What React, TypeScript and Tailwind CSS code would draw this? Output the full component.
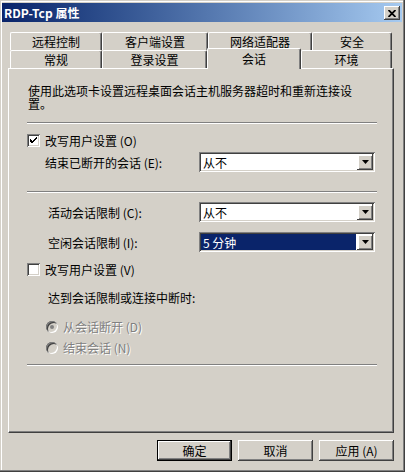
const FONT = "font-['Noto_Sans_CJK_SC','Liberation_Sans',sans-serif]";

const raised =
  "bg-[#d4d0c8] shadow-[inset_-1px_-1px_#404040,inset_1px_1px_#ffffff,inset_-2px_-2px_#808080]";
const sunken =
  "shadow-[inset_1px_1px_#808080,inset_-1px_-1px_#ffffff,inset_2px_2px_#404040,inset_-2px_-2px_#d4d0c8]";

function Tab({ label, width, selected }: { label: string; width: string; selected?: boolean }) {
  return (
    <div
      className={`${width} flex justify-center rounded-t-[2px] border-l border-t border-r border-l-white border-t-white border-r-[#404040] bg-[#d4d0c8] shadow-[inset_-1px_0_#808080] ${
        selected ? "relative z-10 -mb-[1px] h-[21px] items-start pt-[3px]" : "h-[18px] items-center"
      }`}
    >
      {label}
    </div>
  );
}

function Separator({ className }: { className: string }) {
  return <div className={`h-[2px] w-[350px] border-t border-b border-t-[#808080] border-b-white ${className}`} />;
}

function Checkbox({ checked }: { checked?: boolean }) {
  return (
    <div className={`flex h-[13px] w-[13px] shrink-0 items-center justify-center bg-white ${sunken}`}>
      {checked && (
        <svg width="7" height="7" viewBox="0 0 7 7">
          <path d="M0 2 L2 4 L7 -1 L7 1.5 L2 6.5 L0 4.5 Z" fill="#000" shapeRendering="crispEdges" />
        </svg>
      )}
    </div>
  );
}

function Radio({ dot }: { dot?: boolean }) {
  return (
    <div className="flex h-[12px] w-[12px] shrink-0 items-center justify-center rounded-full bg-[#d4d0c8] shadow-[inset_1px_1px_#808080,inset_-1px_-1px_#ffffff,inset_2px_2px_#404040]">
      {dot && <div className="h-[4px] w-[4px] rounded-full bg-[#808080]" />}
    </div>
  );
}

function Combo({ value, selected }: { value: string; selected?: boolean }) {
  return (
    <div className={`flex h-[20px] w-[176px] shrink-0 bg-white p-[2px] ${sunken}`}>
      <div className="flex h-full flex-1 items-center pr-[1px]">
        {selected ? (
          <span className="flex h-full w-full items-center bg-[#0a246a] pl-[2px] text-white">{value}</span>
        ) : (
          <span className="pl-[2px]">{value}</span>
        )}
      </div>
      <div
        className={`flex h-[16px] w-[16px] items-center justify-center bg-[#d4d0c8] shadow-[inset_-1px_-1px_#404040,inset_2px_2px_#ffffff,inset_-2px_-2px_#808080]`}
      >
        <svg width="7" height="4" viewBox="0 0 7 4">
          <path d="M0 0 H7 L3.5 4 Z" fill="#000" />
        </svg>
      </div>
    </div>
  );
}

function Button({ label, primary }: { label: string; primary?: boolean }) {
  return (
    <div className={`h-[21px] w-[75px] ${primary ? "border border-black" : ""}`}>
      <div className={`flex h-full w-full items-center justify-center ${raised}`}>{label}</div>
    </div>
  );
}

export default function App() {
  return (
    <div className={`h-[472px] w-[405px] bg-[#d4d0c8] text-[12px] leading-[13px] text-black ${FONT}`}>
      <div className="flex h-full flex-col pl-[2px] pr-[3px] pt-[3px] shadow-[inset_-1px_-1px_#404040,inset_-2px_-2px_#808080,inset_1px_1px_#d4d0c8,inset_2px_2px_#ffffff]">
        {/* title bar */}
        <div className="flex h-[19px] items-start justify-between bg-linear-to-r from-[#0a246a] to-[#a6caf0] pl-[2px] pr-[2px]">
          <span className="mt-[3px] font-bold text-white">RDP-Tcp 属性</span>
          <div className={`mt-[3px] flex h-[14px] w-[16px] items-center justify-center ${raised}`}>
            <svg width="8" height="7" viewBox="0 0 8 7">
              <path d="M0.5 0 L7.5 7 M7.5 0 L0.5 7" stroke="#000" strokeWidth="1.8" />
            </svg>
          </div>
        </div>

        <div className="ml-[6px] mt-[10px] w-[386px]">
          {/* tabs */}
          <div className="flex pl-[2px]">
            <Tab label="远程控制" width="w-[92px]" />
            <Tab label="客户端设置" width="w-[106px]" />
            <Tab label="网络适配器" width="w-[104px]" />
            <Tab label="安全" width="w-[80px]" />
          </div>
          <div className="flex h-[18px] items-end pl-[2px]">
            <Tab label="常规" width="w-[92px]" />
            <Tab label="登录设置" width="w-[105px]" />
            <Tab label="会话" width="w-[94px]" selected />
            <Tab label="环境" width="w-[91px]" />
          </div>

          {/* panel */}
          <div className="flex h-[365px] flex-col border border-t-white border-l-white border-r-[#404040] border-b-[#404040] pl-[18px] pt-[15px] shadow-[inset_-1px_-1px_#808080]">
            <p className="w-[330px] pl-[1px]">使用此选项卡设置远程桌面会话主机服务器超时和重新连接设置。</p>

            <Separator className="mt-[12px]" />

            <div className="mt-[10px] flex items-center gap-[5px]">
              <Checkbox checked />
              <span>改写用户设置 (O)</span>
            </div>
            <div className="mt-[5px] flex h-[20px] items-center pl-[18px]">
              <span className="w-[154px]">结束已断开的会话 (E):</span>
              <Combo value="从不" />
            </div>

            <Separator className="mt-[19px]" />

            <div className="mt-[9px] flex h-[20px] items-center pl-[21px]">
              <span className="w-[151px]">活动会话限制 (C):</span>
              <Combo value="从不" />
            </div>
            <div className="mt-[10px] flex h-[20px] items-center pl-[21px]">
              <span className="w-[151px]">空闲会话限制 (I):</span>
              <Combo value="5 分钟" selected />
            </div>

            <div className="mt-[11px] flex items-center gap-[5px]">
              <Checkbox />
              <span>改写用户设置 (V)</span>
            </div>
            <p className="mt-[15px] pl-[21px]">达到会话限制或连接中断时:</p>

            <div className="mt-[16px] flex items-center gap-[5px] pl-[19px] text-[#808080] [text-shadow:1px_1px_0_#ffffff]">
              <Radio dot />
              <span>从会话断开 (D)</span>
            </div>
            <div className="mt-[8px] flex items-center gap-[5px] pl-[19px] text-[#808080] [text-shadow:1px_1px_0_#ffffff]">
              <Radio />
              <span>结束会话 (N)</span>
            </div>

            <Separator className="mt-[10px]" />
          </div>

          {/* buttons */}
          <div className="mt-[7px] flex justify-end gap-[6px]">
            <Button label="确定" primary />
            <Button label="取消" />
            <Button label="应用 (A)" />
          </div>
        </div>
      </div>
    </div>
  );
}
